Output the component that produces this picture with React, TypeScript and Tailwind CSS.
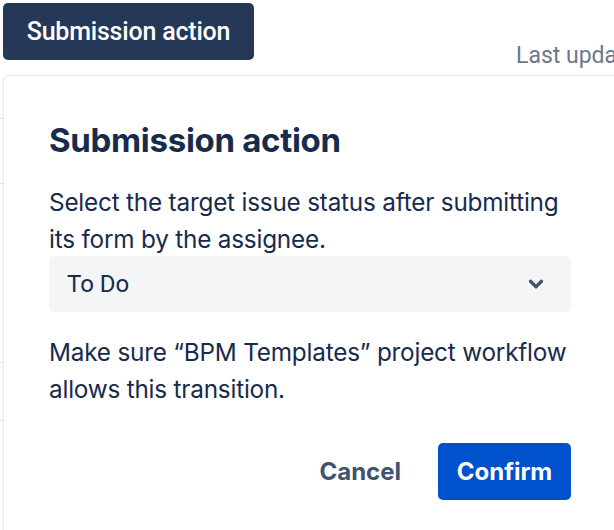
import { ChevronDown } from "lucide-react";

const rows = [118, 183, 362, 420];

export default function App() {
  return (
    <div className="relative w-[614px] h-[530px] overflow-hidden bg-white font-['Inter',sans-serif]">
      {/* page behind the dialog */}
      <div className="flex items-start pl-[3px] pt-[3px]">
        <button className="h-[57px] w-[251px] shrink-0 rounded-[5px] bg-[#253858] text-white text-[25px] font-medium font-['Roboto',sans-serif] tracking-[-0.2px]">
          Submission action
        </button>
        <span className="ml-[262px] mt-[36px] shrink-0 whitespace-nowrap text-[23px] text-[#6b778c] font-['Roboto',sans-serif]">
          Last updated
        </span>
      </div>
      {rows.map((y) => (
        <div key={y} className="absolute left-0 w-[10px] h-px bg-[#e4e6ea]" style={{ top: y }} />
      ))}

      {/* dialog */}
      <div className="absolute left-[3px] top-[75px] w-[640px] h-[480px] rounded-[7px] border border-[#ebecf0] bg-white shadow-[0_0_3px_rgba(9,30,66,0.08)]">
        <div className="pl-[45px] pr-[70px] pt-[44px]">
          <h1 className="text-[33px] leading-[40px] font-bold text-[#172b4d] tracking-[-0.3px]">Submission action</h1>
          <p className="mt-[24px] w-[530px] text-[24.3px] leading-[37px] text-[#172b4d] tracking-[-0.2px]">
            Select the target issue status after submitting its form by the assignee.
          </p>
          <div className="mt-[-2px] flex h-[56px] w-[522px] items-center justify-between rounded-[5px] bg-[#f4f5f7] pl-[18px] pr-[24px]">
            <span className="text-[24px] text-[#172b4d] font-['Roboto',sans-serif]">To Do</span>
            <ChevronDown className="h-[22px] w-[22px] text-[#42526e]" strokeWidth={3.5} />
          </div>
          <p className="mt-[22px] w-[530px] text-[24.3px] leading-[37px] text-[#172b4d] tracking-[-0.2px]">
            Make sure “BPM Templates” project workflow allows this transition.
          </p>
          <div className="mt-[35px] flex w-[522px] items-center justify-end gap-[13px]">
            <button className="h-[57px] px-[24px] text-[24px] font-bold text-[#42526e]">Cancel</button>
            <button className="h-[57px] w-[133px] rounded-[5px] bg-[#0052cc] text-[24px] font-bold text-white">
              Confirm
            </button>
          </div>
        </div>
      </div>
    </div>
  );
}
